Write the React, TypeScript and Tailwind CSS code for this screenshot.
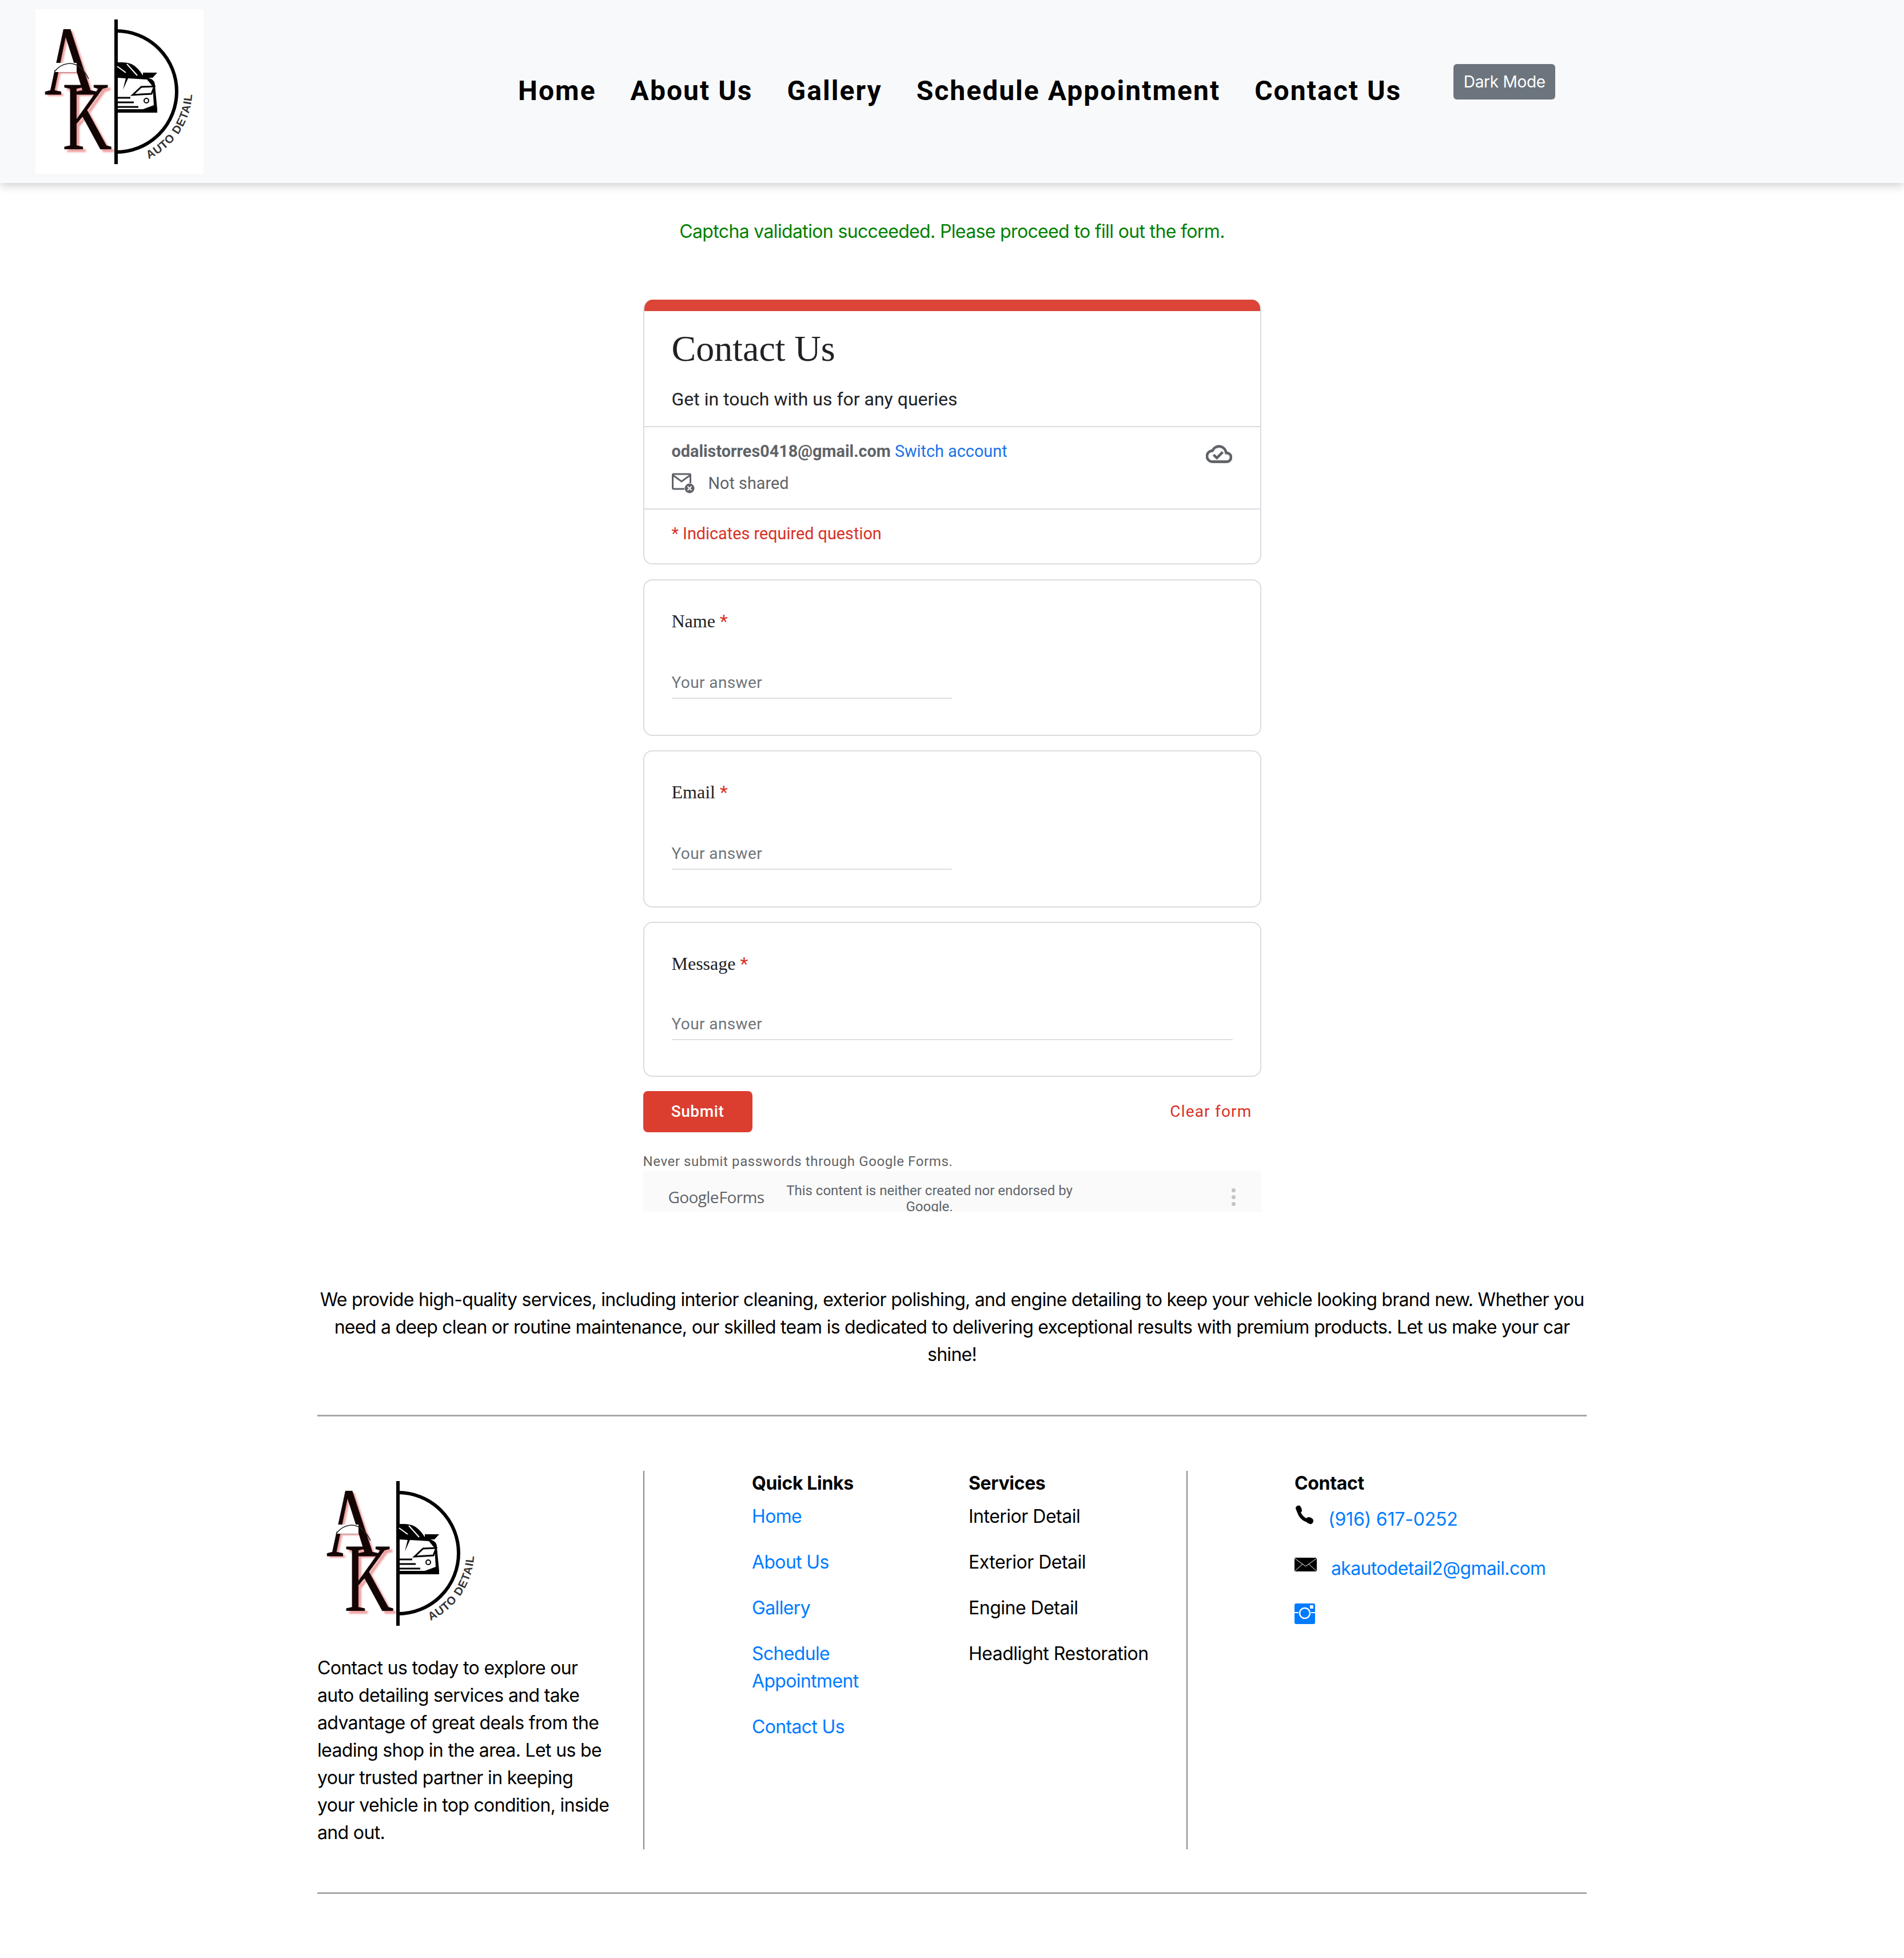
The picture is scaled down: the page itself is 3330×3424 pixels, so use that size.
import React from 'react';

const quickLinks = ['Home', 'About Us', 'Gallery', 'Schedule Appointment', 'Contact Us'];
const services = ['Interior Detail', 'Exterior Detail', 'Engine Detail', 'Headlight Restoration'];
const navItems = ['Home', 'About Us', 'Gallery', 'Schedule Appointment', 'Contact Us'];

const Logo: React.FC<{ id: string }> = ({ id }) => (
  <svg className="block w-[294px] h-[288px]" viewBox="0 0 294 288">
    <defs>
      <filter id={`${id}-blur`}>
        <feGaussianBlur stdDeviation="1.8" />
      </filter>
      <path id={`${id}-arc`} d="M198 262 A132 132 0 0 0 274 136" fill="none" />
    </defs>
    <g fill="#eea0a0" filter={`url(#${id}-blur)`} fontFamily="'Liberation Serif', serif" fontSize="172">
      <text transform="translate(20 152) scale(0.74 1) skewX(4)">A</text>
      <text transform="translate(52 250) scale(0.7 1)">K</text>
    </g>
    <g fill="#140505" stroke="#140505" strokeWidth="1" fontFamily="'Liberation Serif', serif" fontSize="172">
      <text transform="translate(16 149) scale(0.74 1) skewX(4)">A</text>
    </g>
    <rect x="34" y="94" width="38" height="16" fill="#fff" />
    <path d="M33 110 C42 97 58 92 70 97 C80 101 88 112 93 122" fill="none" stroke="#222" strokeWidth="1.5" />
    <text transform="translate(47 245) scale(0.7 1)" fill="#140505" fontFamily="'Liberation Serif', serif" fontSize="172">K</text>
    <rect x="138" y="18" width="6" height="253" fill="#000" />
    <path d="M141 38 A106 106 0 0 1 141 250" fill="none" stroke="#000" strokeWidth="6" />
    {/* car */}
    <path d="M143 93 C155 93 165 93 173 99 C180 104 184 110 188 116 L188 111 L213 111 L205 120 L198 120 C206 123 209 127 209 133 L213 175 L213 181 L143 181 L143 175 L188 175 L207 168 L205 135 L195 123 L162 121 L153 141 L158 121 L143 120 Z" fill="#000" />
    <path d="M143 100 L158 111 M160 96 L178 116" stroke="#fff" strokeWidth="2" fill="none" />
    <path d="M170 150 L185 136 L208 135 L203 148 Z" fill="#fff" stroke="#000" strokeWidth="3" />
    <path d="M143 155 L166 155 M143 163 L172 163 M143 171 L180 171" stroke="#000" strokeWidth="3" fill="none" />
    <circle cx="194" cy="160" r="4" fill="#fff" stroke="#000" strokeWidth="2" />
    <text fontFamily="'Liberation Sans', sans-serif" fontSize="20" fontWeight="700" fill="#333" letterSpacing="1">
      <textPath href={`#${id}-arc`}>AUTO DETAIL</textPath>
    </text>
  </svg>
);

const Question: React.FC<{ label: string; short?: boolean; height: string; answerGap: string }> = ({ label, short, height, answerGap }) => (
  <div className={`${height} mb-[25px] rounded-[16px] border-2 border-[#dadce0] px-[48px] pt-[51px]`}>
    <div className="h-[40px] leading-[40px] text-[32px] text-[#202124] font-['Liberation_Serif',serif]">
      {label} <span className="text-[#d93025] font-['Roboto',sans-serif]">*</span>
    </div>
    <div className={`${answerGap} border-b-2 border-[#e0e0e0] pb-[10px] h-[45px] leading-[34px] text-[28px] tracking-[0.4px] text-[#70757a] font-['Roboto',sans-serif] ${short ? 'w-[490px]' : 'w-full'}`}>
      Your answer
    </div>
  </div>
);

const GoogleForm: React.FC = () => (
  <div className="mx-auto w-[1081px] h-[1595px] overflow-hidden tracking-normal font-['Roboto',sans-serif]">
    <div className="h-[463px] mb-[26px] rounded-[16px] border-2 border-t-0 border-[#dadce0] overflow-hidden">
      <div className="h-[20px] bg-[#db4437] -mx-[2px]" />
      <div className="h-[203px] border-b-2 border-[#dadce0] px-[48px] pt-[30px]">
        <div className="h-[72px] leading-[72px] text-[64px] text-[#202124] font-['Liberation_Serif',serif]">Contact Us</div>
        <div className="mt-[30px] leading-[44px] text-[32px] text-[#202124]">Get in touch with us for any queries</div>
      </div>
      <div className="relative h-[144px] border-b-2 border-[#dadce0] px-[48px] pt-[24px] text-[28.8px]">
        <div className="leading-[36px]">
          <span className="font-bold text-[#5f6368]">odalistorres0418@gmail.com</span>{' '}
          <span className="text-[#1a73e8]">Switch account</span>
        </div>
        <div className="mt-[20px] flex items-center leading-[36px] text-[#5f6368]">
          <svg className="w-[40px] h-[36px] mr-[24px]" viewBox="0 0 40 36">
            <path d="M22 28 H3 A1.5 1.5 0 0 1 1.5 26.5 V3.5 A1.5 1.5 0 0 1 3 2 H31 A1.5 1.5 0 0 1 32.5 3.5 V18" fill="none" stroke="#5f6368" strokeWidth="3" />
            <path d="M2 4 L17 15 L32 4" fill="none" stroke="#5f6368" strokeWidth="3" />
            <circle cx="31" cy="27" r="8.5" fill="#5f6368" />
            <path d="M27.5 23.5 L34.5 30.5 M34.5 23.5 L27.5 30.5" stroke="#fff" strokeWidth="1.8" />
          </svg>
          Not shared
        </div>
        <svg className="absolute right-[49px] top-[24px] w-[46px] h-[46px]" viewBox="0 0 24 24" fill="#5f6368" stroke="#5f6368" strokeWidth="0.5">
          <path d="M19.35 10.04C18.67 6.59 15.64 4 12 4 9.11 4 6.6 5.64 5.35 8.04 2.34 8.36 0 10.91 0 14c0 3.31 2.69 6 6 6h13c2.76 0 5-2.24 5-5 0-2.64-2.05-4.78-4.65-4.96zM19 18H6c-2.21 0-4-1.79-4-4 0-2.05 1.53-3.76 3.56-3.97l1.07-.11.5-.95C8.08 7.14 9.94 6 12 6c2.62 0 4.88 1.86 5.39 4.43l.3 1.5 1.53.11c1.56.1 2.78 1.41 2.78 2.96 0 1.65-1.35 3-3 3zm-9-3.82l-2.09-2.09L6.5 13.5 10 17l6.01-6.01-1.41-1.41z" />
        </svg>
      </div>
      <div className="px-[48px] pt-[24px] leading-[36px] text-[28.8px] text-[#d93025]">* Indicates required question</div>
    </div>

    <Question label="Name" short height="h-[274px]" answerGap="mt-[71px]" />
    <Question label="Email" short height="h-[275px]" answerGap="mt-[71px]" />
    <Question label="Message" height="h-[271px]" answerGap="mt-[69px]" />

    <div className="flex items-center justify-between">
      <div className="w-[191px] h-[72px] rounded-[8px] bg-[#db3e2f] text-white text-[28px] font-medium flex items-center justify-center tracking-[0.6px]">Submit</div>
      <div className="pr-[16px] text-[28px] text-[#d93025] tracking-[1.2px]">Clear form</div>
    </div>
    <div className="mt-[35px] h-[33px] leading-[33px] text-[24px] tracking-[0.6px] text-[#5f6368]">Never submit passwords through Google Forms.</div>
    <div className="relative h-[71px] overflow-hidden bg-[#fafafa] text-[#5f6368]">
      <div className="absolute left-[44px] top-[27px] text-[28px] leading-[36px] tracking-[-0.6px] [word-spacing:-6px] font-['Open_Sans',sans-serif]">Google Forms</div>
      <div className="absolute left-[241px] top-[20px] w-[520px] text-center text-[24px] leading-[28px]">This content is neither created nor endorsed by Google.</div>
      <div className="absolute right-[45px] top-[30px] flex flex-col gap-[5px]">
        <span className="w-[7px] h-[7px] rounded-full bg-[#c4c4c4]" />
        <span className="w-[7px] h-[7px] rounded-full bg-[#c4c4c4]" />
        <span className="w-[7px] h-[7px] rounded-full bg-[#c4c4c4]" />
      </div>
    </div>
  </div>
);

export default function App() {
  return (
    <div className="min-h-[3424px] bg-white text-[32px] leading-[48px] tracking-[-0.65px] text-black font-['Inter',sans-serif]">
      <header className="h-[320px] flex items-start bg-[#f8f9fa] pl-[62px] pt-[16px] shadow-[0_4px_16px_rgba(0,0,0,0.2)]">
        <div className="bg-white"><Logo id="top" /></div>
        <nav className="ml-[550px] mt-[104px] flex gap-[60px] text-[48px] leading-[78px] font-bold tracking-[2.03px] font-['Roboto',sans-serif]">
          {navItems.map((item) => (
            <a key={item}>{item}</a>
          ))}
        </nav>
        <button className="ml-[91px] mt-[96px] h-[62px] w-[178px] rounded-[6px] bg-[#6c757d] text-[28px] tracking-[-0.3px] text-white">Dark Mode</button>
      </header>

      <div className="mt-[61px] text-center text-[#008000]">Captcha validation succeeded. Please proceed to fill out the form.</div>

      <div className="mt-[95px]">
        <GoogleForm />
      </div>

      <div className="mx-auto w-[2220px]">
        <p className="mt-[130px] -mx-[6px] text-center tracking-[-0.72px]">
          We provide high-quality services, including interior cleaning, exterior polishing, and engine detailing to keep your vehicle looking brand new. Whether you need a deep clean or routine maintenance, our skilled team is dedicated to delivering exceptional results with premium products. Let us make your car shine!
        </p>
        <hr className="mt-[81px] border-t-[3px] border-[#a8a8a8]" />

        <footer className="mt-[95px] flex h-[662px]">
          <div className="w-[570px] pr-[55px]">
            <Logo id="bottom" />
            <p className="mt-[33px]">
              Contact us today to explore our auto detailing services and take advantage of great deals from the leading shop in the area. Let us be your trusted partner in keeping your vehicle in top condition, inside and out.
            </p>
          </div>

          <div className="w-[952px] flex border-x-2 border-[#888] pl-[188px]">
            <div className="w-[379px]">
              <h5 className="-mt-[2px] font-bold tracking-[-0.35px]">Quick Links</h5>
              <ul className="mt-[10px] w-[230px] space-y-[32px]">
                {quickLinks.map((link) => (
                  <li key={link} className="text-[#007bff]">{link}</li>
                ))}
              </ul>
            </div>
            <div>
              <h5 className="-mt-[2px] font-bold tracking-[-0.35px]">Services</h5>
              <ul className="mt-[10px] space-y-[32px] tracking-[-0.5px]">
                {services.map((service) => (
                  <li key={service}>{service}</li>
                ))}
              </ul>
            </div>
          </div>

          <div className="pl-[187px]">
            <h5 className="-mt-[2px] font-bold tracking-[-0.35px]">Contact</h5>
            <div className="mt-[14px] flex items-start h-[92px]">
              <svg className="w-[34px] h-[34px]" viewBox="0 0 34 34">
                <path d="M7 6 C7 17 15 27 28 28" fill="none" stroke="#000" strokeWidth="6" />
                <path d="M2 6 C2 2 6 0 9 1 C11 2 13 7 13 10 C13 12 10 13 8 13 L5 13 Z" fill="#000" />
                <path d="M20 25 C21 22 23 21 25 21 C28 21 33 24 33 27 C33 31 30 34 27 33 L22 31 Z" fill="#000" />
              </svg>
              <a className="ml-[25px] mt-[1px] tracking-[-0.2px] text-[#007bff]">(916) 617-0252</a>
            </div>
            <div className="flex items-start h-[80px]">
              <svg className="w-[39px] h-[24px]" viewBox="0 0 39 24">
                <rect width="39" height="24" rx="2" fill="#000" />
                <path d="M0 1 L19.5 15 L39 1 M1 23 L14 11 M38 23 L25 11" fill="none" stroke="#fff" strokeWidth="1" />
              </svg>
              <a className="ml-[25px] -mt-[5px] text-[#007bff]">akautodetail2@gmail.com</a>
            </div>
            <svg className="w-[36px] h-[36px]" viewBox="0 0 36 36">
              <rect width="36" height="36" rx="3" fill="#007bff" />
              <path d="M0 16 H36" stroke="#fff" strokeWidth="2" />
              <circle cx="18" cy="17" r="11" fill="#007bff" />
              <circle cx="18" cy="17" r="9" fill="#007bff" stroke="#fff" strokeWidth="2.5" />
              <rect x="27" y="3" width="6" height="6" rx="1" fill="#fff" />
            </svg>
          </div>
        </footer>

        <hr className="mt-[75px] border-t-[3px] border-[#a8a8a8]" />
      </div>
    </div>
  );
}
